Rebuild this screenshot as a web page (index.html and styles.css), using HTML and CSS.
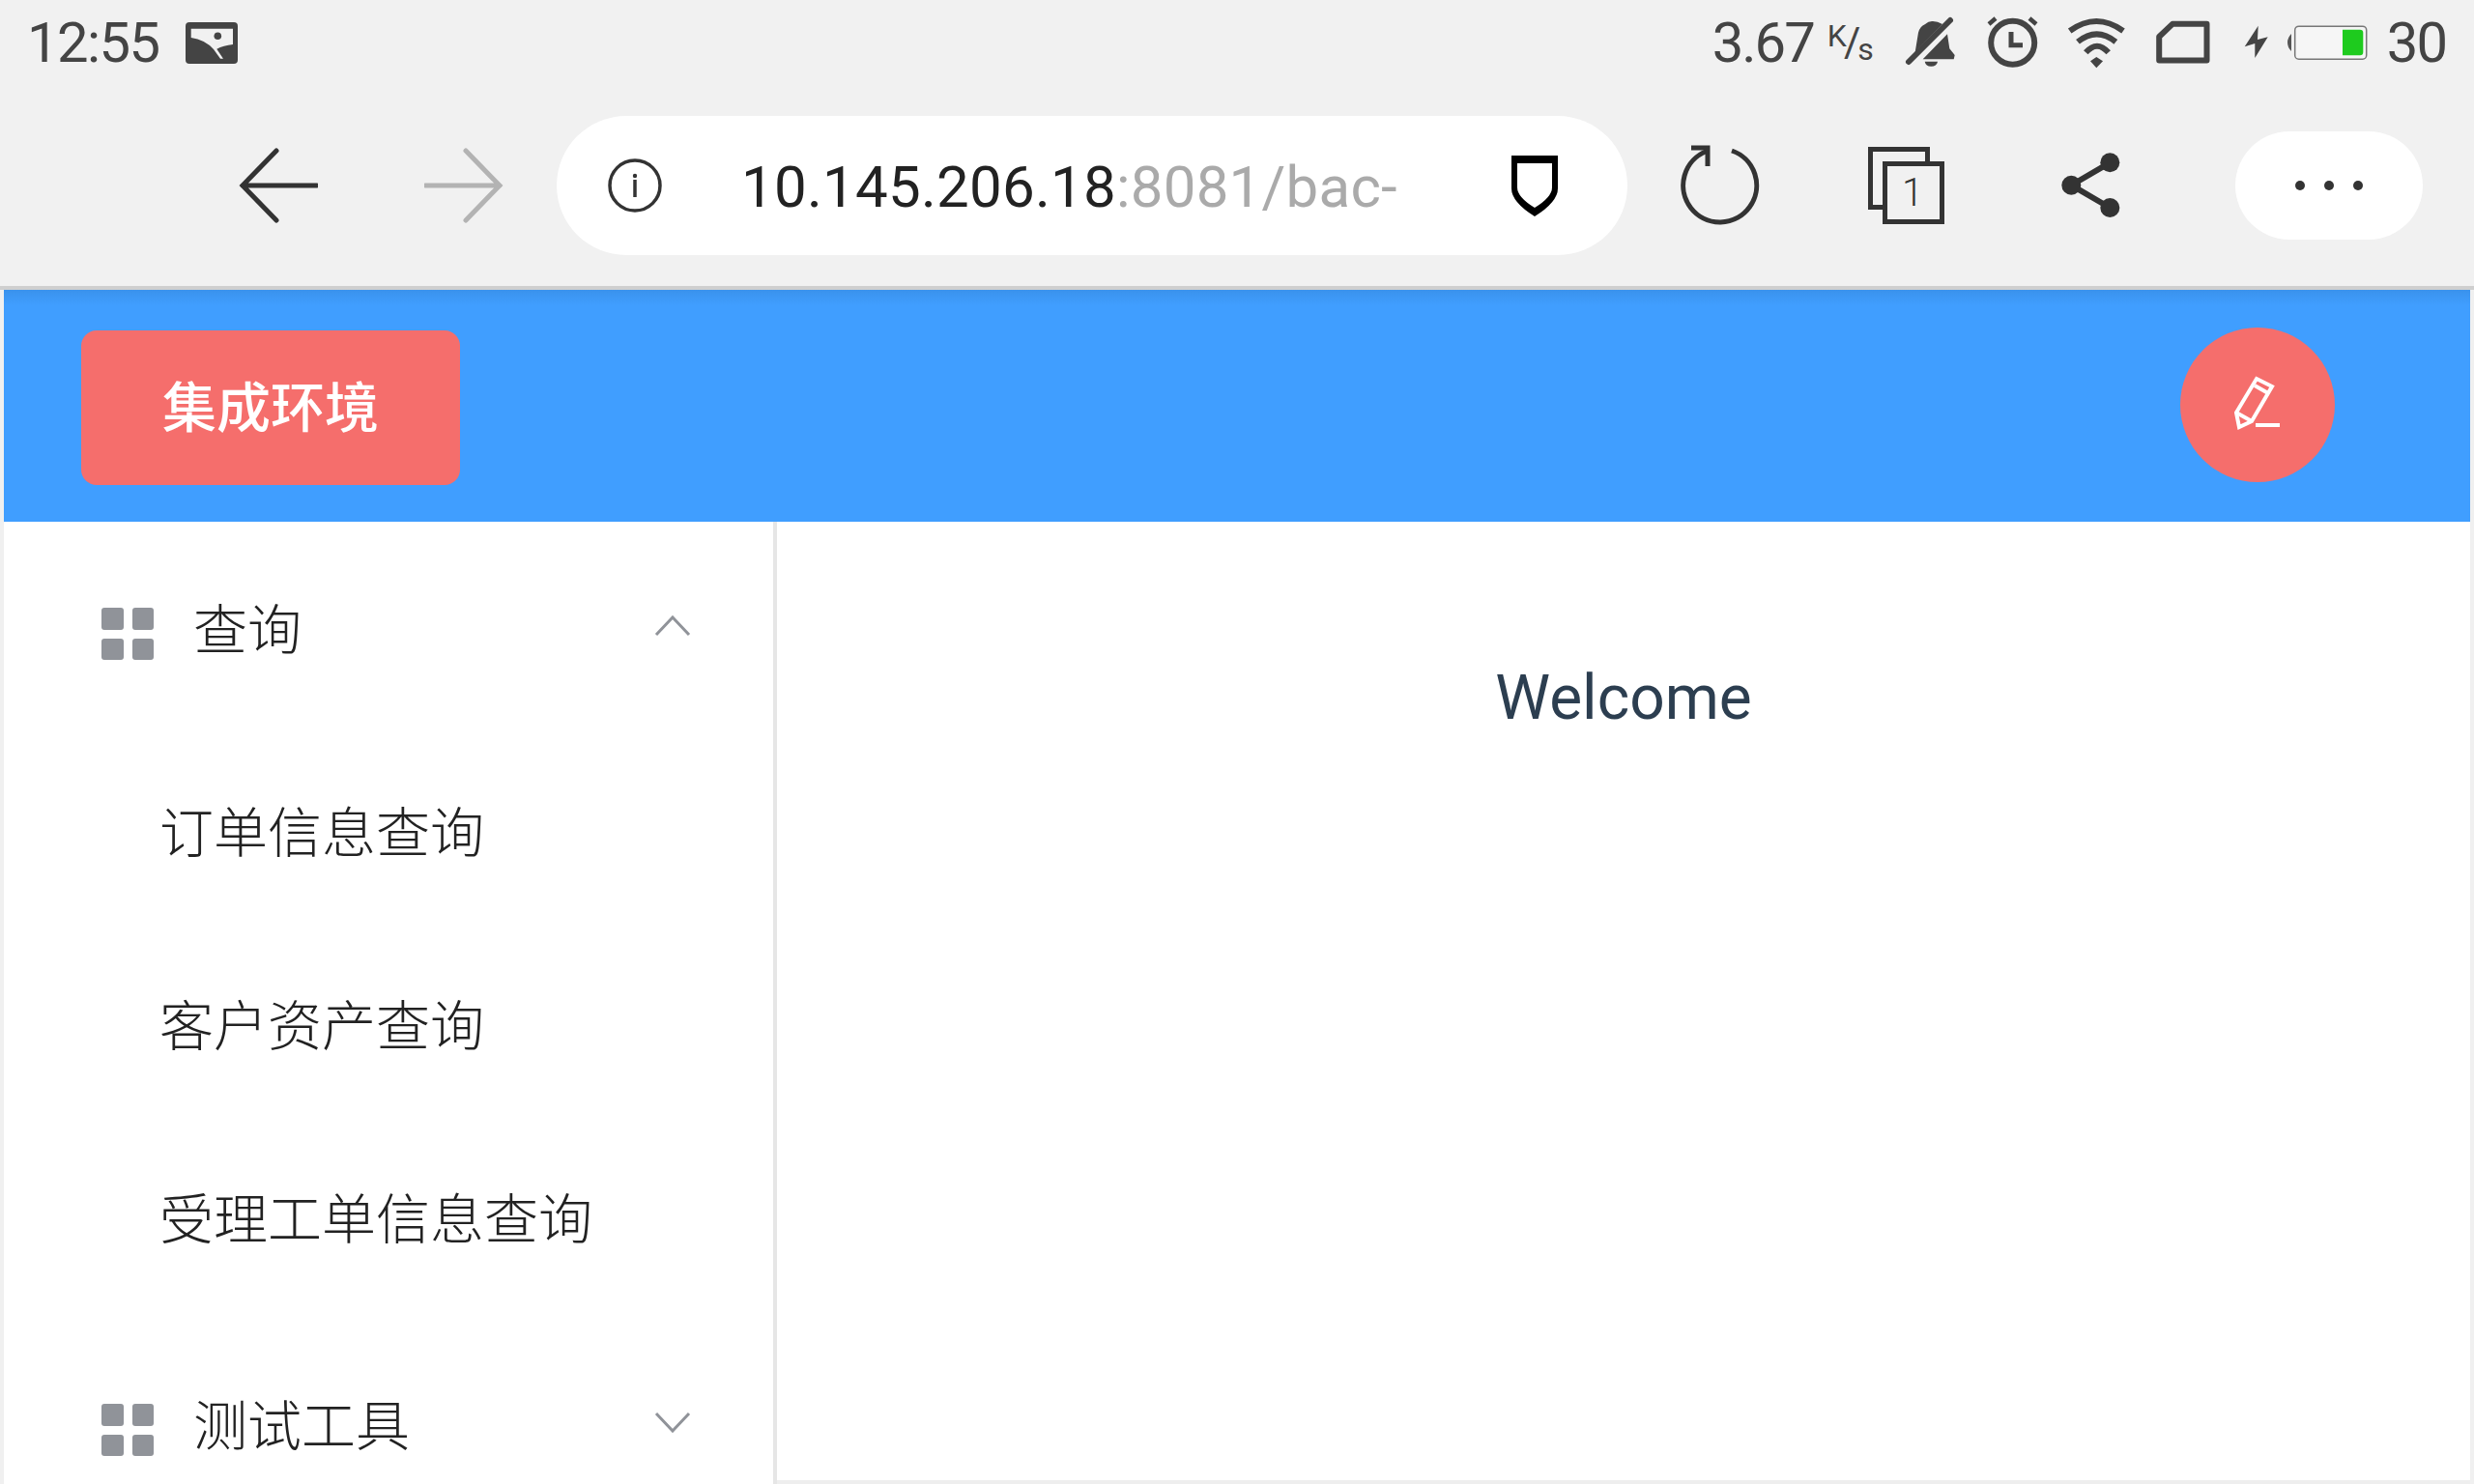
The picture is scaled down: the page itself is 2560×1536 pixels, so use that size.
FILE: index.html
```html
<!DOCTYPE html>
<html lang="zh-CN">

<head>
    <meta charset="UTF-8">
    <meta name="viewport" content="width=device-width, initial-scale=1.0">
    <title>集成环境</title>
    <link rel="stylesheet" href="styles.css">
</head>

<body>
    <!-- phone status bar -->
    <div class="statusbar">
        <div class="status-left">
            <span class="time">12:55</span>
            <svg class="icon-photo" width="54" height="43" viewBox="0 0 54 43">
                <rect width="54" height="43" rx="4" fill="#444"/>
                <path d="M5.7 6.7H49V23Q39 24 32.3 27.7L39 37.7H36L29 28Q20 18 5.7 16Z" fill="#f1f1f1"/>
                <circle cx="33.3" cy="14.3" r="3.8" fill="#444"/>
            </svg>
        </div>
        <div class="status-right">
            <span class="speed">3.67</span>
            <span class="speed-unit"><span class="unit-k">K</span><span class="unit-slash">/</span><span class="unit-s">s</span></span>
            <svg class="icon-bell" width="56" height="56" viewBox="0 0 56 56" fill="#444">
                <path d="M11.7 38L15 17.7Q17 11 21.7 9.3Q26 5.5 30 6Q35 6 40 9Z"/>
                <path d="M45 19.3L47.3 34.3L52.7 41L51.7 45.3H19.7Z"/>
                <path d="M21.7 47.7H35Q34 52.7 28.3 52.7Q22.7 52.7 21.7 47.7Z"/>
                <path d="M5 48L48 5" stroke="#444" stroke-width="6" stroke-linecap="round"/>
            </svg>
            <svg class="icon-alarm" width="54" height="56" viewBox="0 0 54 56" fill="none" stroke="#444">
                <circle cx="26.7" cy="28.3" r="22.5" stroke-width="6"/>
                <path d="M25 17V30.7H37" stroke-width="5"/>
                <path d="M2 9L9 3M44 3L51 9" stroke-width="4.5"/>
            </svg>
            <svg class="icon-wifi" width="68" height="58" viewBox="0 0 68 58" fill="none" stroke="#444" stroke-width="6">
                <path d="M5.7 17Q33.3 -3 61 17"/>
                <path d="M14 28.3Q33.6 12.3 53.3 28.3"/>
                <path d="M22.3 39.3Q34 26 45.7 39.3"/>
                <path d="M27 48.3L33.3 44L40 48.3L33.3 55.3Z" fill="#444" stroke="none"/>
            </svg>
            <svg class="icon-sim" width="58" height="48" viewBox="0 0 58 48" fill="none">
                <path d="M4.2 18L18 4.8H53.5V42.5H4.2Z" stroke="#444" stroke-width="6" stroke-linejoin="round"/>
            </svg>
            <svg class="icon-bolt" width="30" height="40" viewBox="0 0 30 40">
                <path d="M16.7 2.7L2.7 24.3L13.3 21V36L26.7 14.3L16 17Z" fill="#444"/>
            </svg>
            <svg class="icon-battery" width="84" height="38" viewBox="0 0 84 38">
                <path d="M5 10Q1 14 1 19Q1 24 5 28Z" fill="#555"/>
                <rect x="8.7" y="2.2" width="74" height="34" rx="4" fill="#f6f6f6" stroke="#777" stroke-width="1.5"/>
                <path d="M58 5.7H76Q79.3 5.7 79.3 9V29Q79.3 32.3 76 32.3H58Z" fill="#1ecb1e"/>
            </svg>
            <span class="battery-level">30</span>
        </div>
    </div>

    <!-- browser toolbar -->
    <div class="toolbar">
        <svg class="icon-back" width="84" height="80" viewBox="0 0 84 80" fill="none" stroke="#333" stroke-width="5">
            <path d="M41 4L6 40L41 76M6 40H83" stroke-linecap="round"/>
        </svg>
        <svg class="icon-forward" width="84" height="80" viewBox="0 0 84 80" fill="none" stroke="#b3b3b3" stroke-width="5">
            <path d="M43 4L78 40L43 76M78 40H1" stroke-linecap="round"/>
        </svg>
        <div class="urlbar">
            <svg class="icon-info" width="58" height="58" viewBox="0 0 58 58" fill="none" stroke="#333" stroke-width="3.5">
                <circle cx="29" cy="29" r="26"/>
                <path d="M29 23V41"/>
                <circle cx="29" cy="19" r="2.2" fill="#333" stroke="none"/>
            </svg>
            <span class="url"><span class="url-host">10.145.206.18</span>:8081/bac-</span>
            <svg class="icon-shield" width="48" height="63" viewBox="0 0 48 63">
                <path fill-rule="evenodd" d="M0 0H48V34Q48 48 24 63Q0 48 0 34ZM6 8V33Q6 43 24 54Q42 43 42 33V8Z" fill="#000"/>
            </svg>
        </div>
        <svg class="icon-reload" width="84" height="84" viewBox="0 0 84 84" fill="none" stroke="#333" stroke-width="5">
            <path d="M54 6A38 38 0 1 1 28 6.5"/>
            <path d="M12 3H29V22"/>
        </svg>
        <svg class="icon-tabs" width="79" height="80" viewBox="0 0 79 80" fill="none" stroke="#333" stroke-width="5">
            <rect x="2.5" y="2.5" width="59" height="60"/>
            <rect x="17.5" y="17.5" width="59" height="60" fill="#f1f1f1"/>
            <text class="tabs-count" x="46" y="61" text-anchor="middle">1</text>
        </svg>
        <svg class="icon-share" width="64" height="72" viewBox="0 0 64 72" fill="#333" stroke="#333">
            <path d="M51.3 12.3L11.3 35.7L51.3 59" fill="none" stroke-width="6"/>
            <circle cx="11.3" cy="35.7" r="10" stroke="none"/>
            <circle cx="51.3" cy="12.3" r="10" stroke="none"/>
            <circle cx="51.3" cy="59" r="10" stroke="none"/>
        </svg>
        <div class="more">
            <span class="dot"></span>
            <span class="dot"></span>
            <span class="dot"></span>
        </div>
    </div>

    <!-- the page itself -->
    <div class="app">
        <div class="header">
            <div class="env-tag">集成环境</div>
            <div class="edit-btn">
                <svg width="60" height="60" viewBox="0 0 60 60" fill="none" stroke="#fff" stroke-width="4">
                    <path d="M29 3L45 11L24 47L11 53L8 38Z"/>
                    <path d="M8 38L24 47M27 10L41 18"/>
                    <path d="M28 51H53"/>
                </svg>
            </div>
        </div>
        <div class="content">
            <div class="sidebar">
                <div class="menu-title">
                    <span class="grid-icon"><i></i><i></i><i></i><i></i></span>
                    <span class="menu-label">查询</span>
                    <svg class="chevron" width="38" height="22" viewBox="0 0 38 22" fill="none" stroke="#909399" stroke-width="3">
                        <path d="M2 20L19 2L36 20"/>
                    </svg>
                </div>
                <div class="menu-item">订单信息查询</div>
                <div class="menu-item">客户资产查询</div>
                <div class="menu-item">受理工单信息查询</div>
                <div class="menu-title">
                    <span class="grid-icon"><i></i><i></i><i></i><i></i></span>
                    <span class="menu-label">测试工具</span>
                    <svg class="chevron" width="38" height="22" viewBox="0 0 38 22" fill="none" stroke="#909399" stroke-width="3">
                        <path d="M2 2L19 20L36 2"/>
                    </svg>
                </div>
            </div>
            <div class="main">
                <p class="welcome">Welcome</p>
            </div>
        </div>
    </div>
</body>

</html>
```

FILE: styles.css
```css
body {
    margin: 0;
    height: 1536px;
    overflow: hidden;
    background-color: #f1f1f1;
    font-family: Roboto, "Noto Sans CJK SC", sans-serif;
    color: #303133;
}

svg {
    display: block;
    flex: none;
}

/* status bar */
.statusbar {
    height: 84px;
    display: flex;
    justify-content: space-between;
    align-items: center;
    padding: 4px 29px 0 28px;
    box-sizing: border-box;
    color: #444;
    font-size: 58px;
    letter-spacing: -2px;
}

.status-left,
.status-right {
    display: flex;
    align-items: center;
}

.time {
    letter-spacing: -1.6px;
}

.icon-photo {
    margin-left: 28px;
}

.speed {
    margin-right: 2px;
}

.speed-unit {
    display: flex;
    height: 44px;
    width: 46px;
    margin-left: 12px;
    letter-spacing: -1px;
    font-size: 32px;
    line-height: 30px;
}

.unit-k {
    align-self: flex-start;
}

.unit-slash {
    align-self: center;
    margin: 0 -2px;
    font-size: 42px;
    line-height: 44px;
}

.unit-s {
    align-self: flex-end;
}

.icon-bell {
    margin-left: 33px;
}

.icon-alarm {
    margin-left: 30px;
}

.icon-wifi {
    margin-left: 26px;
}

.icon-sim {
    margin-left: 26px;
}

.icon-bolt {
    margin-left: 32px;
}

.icon-battery {
    margin-left: 16px;
}

.battery-level {
    margin-left: 20px;
}

/* browser toolbar */
.toolbar {
    height: 216px;
    box-sizing: border-box;
    padding: 4px 0 0 245px;
    display: flex;
    align-items: center;
    border-bottom: 4px solid #cfcfcf;
}

.icon-forward {
    margin-left: 110px;
}

.urlbar {
    width: 1108px;
    height: 144px;
    margin-left: 53px;
    padding: 0 72px 0 52px;
    box-sizing: border-box;
    display: flex;
    align-items: center;
    background: white;
    border-radius: 72px;
}

.url {
    flex: 1;
    margin-left: 81px;
    padding-top: 2px;
    font-size: 60px;
    letter-spacing: 0.25px;
    color: #aaa;
    white-space: nowrap;
}

.url-host {
    color: #222;
}

.icon-reload {
    margin-left: 54px;
}

.icon-tabs {
    margin-left: 111px;
}

.tabs-count {
    font-size: 40px;
    font-weight: 300;
    fill: #333;
    stroke: none;
}

.icon-share {
    margin-left: 120px;
}

.more {
    width: 194px;
    height: 112px;
    margin-left: 117px;
    display: flex;
    justify-content: center;
    align-items: center;
    gap: 20px;
    background: white;
    border-radius: 56px;
}

.dot {
    width: 10px;
    height: 10px;
    border-radius: 50%;
    background-color: #333;
}

/* page */
.app {
    height: 1236px;
    padding: 0 4px;
    box-sizing: border-box;
    display: flex;
    flex-direction: column;
    background-color: #f0f0f0;
}

.header {
    height: 240px;
    flex: none;
    padding: 0 140px 0 80px;
    display: flex;
    justify-content: space-between;
    align-items: center;
    background: linear-gradient(#3a92ec, #409eff 16px);
}

.env-tag {
    width: 392px;
    height: 160px;
    margin-top: 4px;
    padding-bottom: 10px;
    box-sizing: border-box;
    display: flex;
    justify-content: center;
    align-items: center;
    background-color: #f56e6c;
    border-radius: 16px;
    color: white;
    font-size: 56px;
    font-weight: 500;
}

.edit-btn {
    width: 160px;
    height: 160px;
    margin-top: -2px;
    display: flex;
    justify-content: center;
    align-items: center;
    background-color: #f56e6c;
    border-radius: 50%;
}

.content {
    flex: 1;
    display: flex;
    min-height: 0;
    background: white;
}

.sidebar {
    width: 800px;
    flex: none;
    padding-top: 4px;
    box-sizing: border-box;
    overflow: hidden;
    border-right: 4px solid #e6e6e6;
    font-size: 56px;
    font-weight: 300;
    color: #222;
}

.menu-title {
    height: 224px;
    padding: 0 85px 0 101px;
    display: flex;
    align-items: center;
}

.grid-icon {
    width: 54px;
    height: 54px;
    flex: none;
    display: grid;
    grid-template-columns: 1fr 1fr;
    gap: 9px;
}

.grid-icon i {
    background-color: #909399;
    border-radius: 3px;
}

.menu-label {
    flex: 1;
    margin-left: 41px;
    margin-bottom: 18px;
}

.chevron {
    margin-bottom: 16px;
}

.menu-item {
    height: 200px;
    padding-left: 161px;
    padding-bottom: 22px;
    box-sizing: border-box;
    display: flex;
    align-items: center;
}

.main {
    flex: 1;
    border-bottom: 4px solid #eee;
}

.welcome {
    margin: 145px 0 0;
    font-size: 64px;
    line-height: 76px;
    text-align: center;
    color: #2c3e50;
}
```
